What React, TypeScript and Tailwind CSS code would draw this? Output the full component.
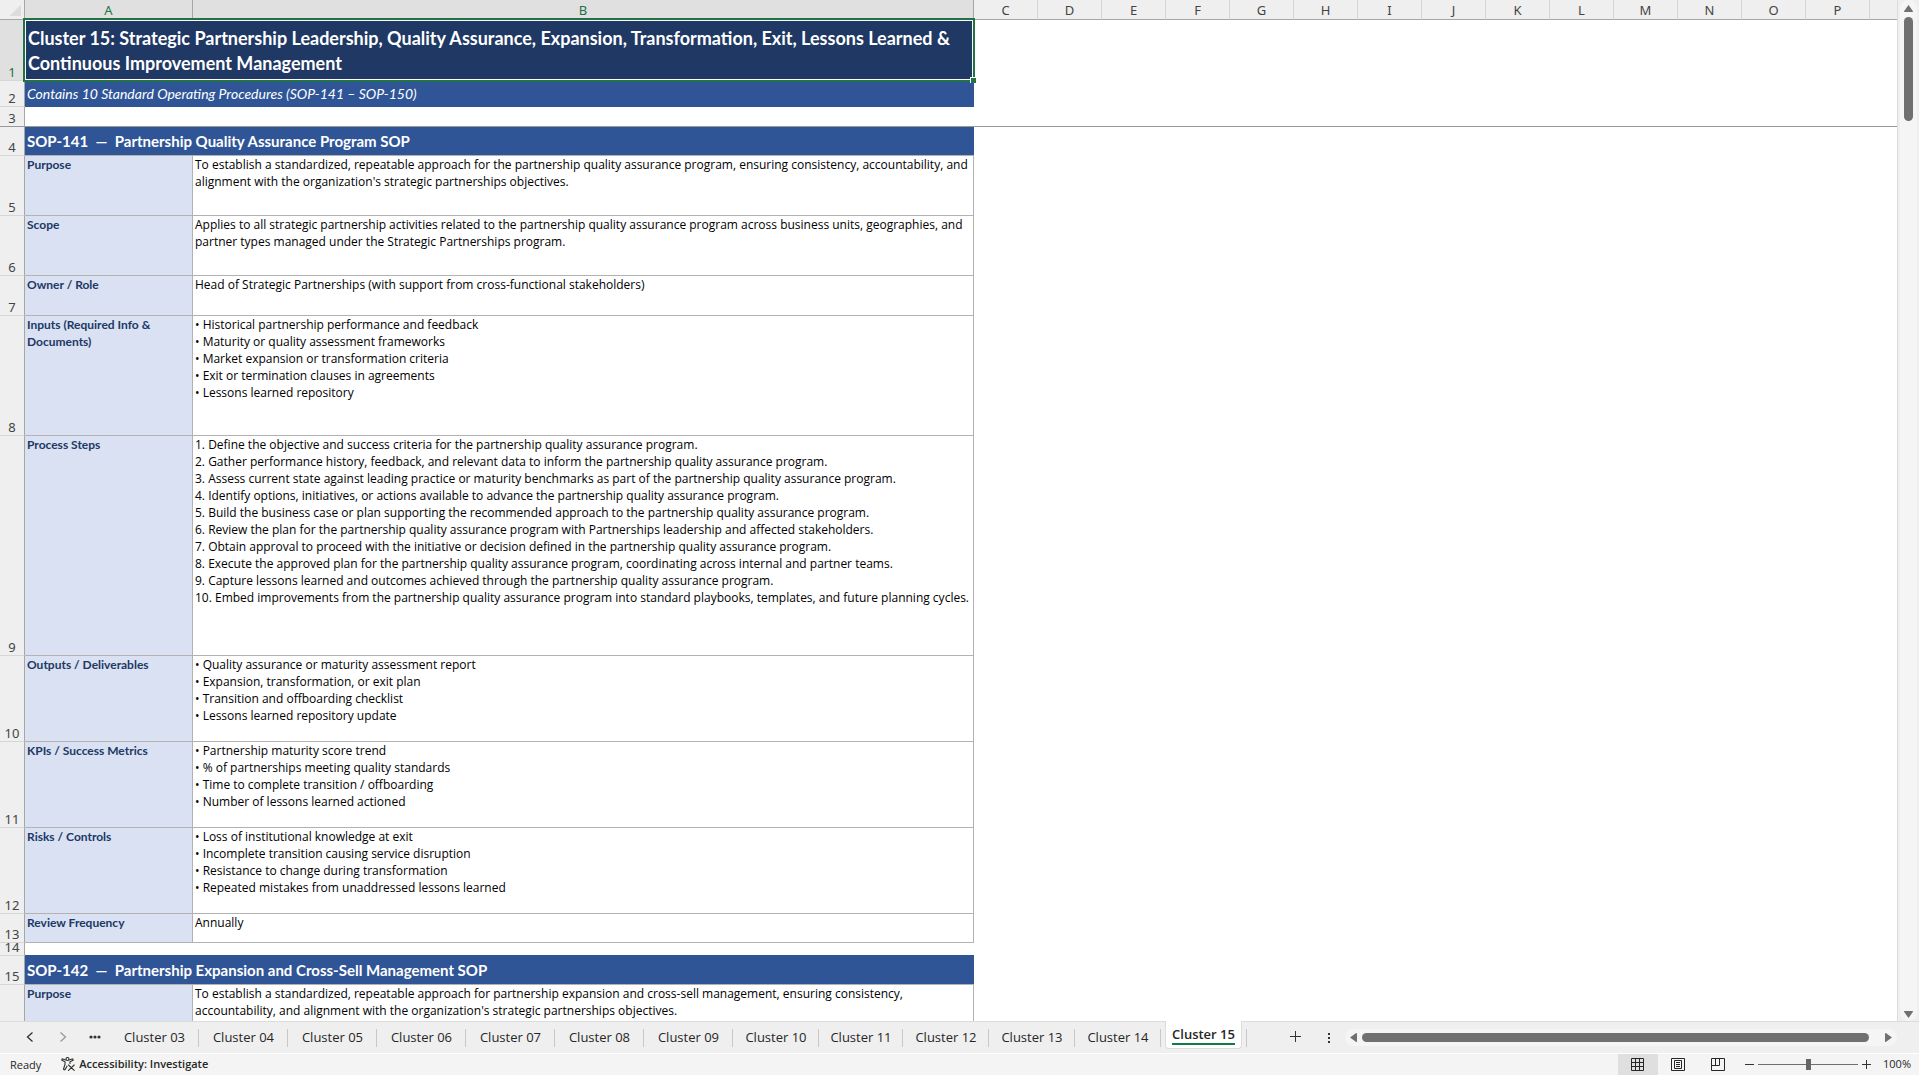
import { useState } from "react";
import clsx from "clsx";

interface SheetRow {
  n: number;
  kind: "title" | "subtitle" | "blank" | "heading" | "field";
  height: string;
  label?: string;
  lines?: string[];
  frozen?: boolean;
}

const COLUMNS = ["C", "D", "E", "F", "G", "H", "I", "J", "K", "L", "M", "N", "O", "P"];

const ROWS: SheetRow[] = [
  {
    n: 1,
    kind: "title",
    height: "h-[61px]",
    lines: [
      "Cluster 15: Strategic Partnership Leadership, Quality Assurance, Expansion, Transformation, Exit, Lessons Learned &",
      "Continuous Improvement Management",
    ],
  },
  { n: 2, kind: "subtitle", height: "h-[26px]", lines: ["Contains 10 Standard Operating Procedures (SOP-141 – SOP-150)"] },
  { n: 3, kind: "blank", height: "h-[20px]", frozen: true },
  { n: 4, kind: "heading", height: "h-[29px]", lines: ["SOP-141  —  Partnership Quality Assurance Program SOP"] },
  {
    n: 5,
    kind: "field",
    height: "h-[60px]",
    label: "Purpose",
    lines: [
      "To establish a standardized, repeatable approach for the partnership quality assurance program, ensuring consistency, accountability, and",
      "alignment with the organization's strategic partnerships objectives.",
    ],
  },
  {
    n: 6,
    kind: "field",
    height: "h-[60px]",
    label: "Scope",
    lines: [
      "Applies to all strategic partnership activities related to the partnership quality assurance program across business units, geographies, and",
      "partner types managed under the Strategic Partnerships program.",
    ],
  },
  {
    n: 7,
    kind: "field",
    height: "h-[40px]",
    label: "Owner / Role",
    lines: ["Head of Strategic Partnerships (with support from cross-functional stakeholders)"],
  },
  {
    n: 8,
    kind: "field",
    height: "h-[120px]",
    label: "Inputs (Required Info & Documents)",
    lines: [
      "• Historical partnership performance and feedback",
      "• Maturity or quality assessment frameworks",
      "• Market expansion or transformation criteria",
      "• Exit or termination clauses in agreements",
      "• Lessons learned repository",
    ],
  },
  {
    n: 9,
    kind: "field",
    height: "h-[220px]",
    label: "Process Steps",
    lines: [
      "1. Define the objective and success criteria for the partnership quality assurance program.",
      "2. Gather performance history, feedback, and relevant data to inform the partnership quality assurance program.",
      "3. Assess current state against leading practice or maturity benchmarks as part of the partnership quality assurance program.",
      "4. Identify options, initiatives, or actions available to advance the partnership quality assurance program.",
      "5. Build the business case or plan supporting the recommended approach to the partnership quality assurance program.",
      "6. Review the plan for the partnership quality assurance program with Partnerships leadership and affected stakeholders.",
      "7. Obtain approval to proceed with the initiative or decision defined in the partnership quality assurance program.",
      "8. Execute the approved plan for the partnership quality assurance program, coordinating across internal and partner teams.",
      "9. Capture lessons learned and outcomes achieved through the partnership quality assurance program.",
      "10. Embed improvements from the partnership quality assurance program into standard playbooks, templates, and future planning cycles.",
    ],
  },
  {
    n: 10,
    kind: "field",
    height: "h-[86px]",
    label: "Outputs / Deliverables",
    lines: [
      "• Quality assurance or maturity assessment report",
      "• Expansion, transformation, or exit plan",
      "• Transition and offboarding checklist",
      "• Lessons learned repository update",
    ],
  },
  {
    n: 11,
    kind: "field",
    height: "h-[86px]",
    label: "KPIs / Success Metrics",
    lines: [
      "• Partnership maturity score trend",
      "• % of partnerships meeting quality standards",
      "• Time to complete transition / offboarding",
      "• Number of lessons learned actioned",
    ],
  },
  {
    n: 12,
    kind: "field",
    height: "h-[86px]",
    label: "Risks / Controls",
    lines: [
      "• Loss of institutional knowledge at exit",
      "• Incomplete transition causing service disruption",
      "• Resistance to change during transformation",
      "• Repeated mistakes from unaddressed lessons learned",
    ],
  },
  { n: 13, kind: "field", height: "h-[29px]", label: "Review Frequency", lines: ["Annually"] },
  { n: 14, kind: "blank", height: "h-[13px]" },
  { n: 15, kind: "heading", height: "h-[29px]", lines: ["SOP-142  —  Partnership Expansion and Cross-Sell Management SOP"] },
  {
    n: 16,
    kind: "field",
    height: "h-[60px]",
    label: "Purpose",
    lines: [
      "To establish a standardized, repeatable approach for partnership expansion and cross-sell management, ensuring consistency,",
      "accountability, and alignment with the organization's strategic partnerships objectives.",
    ],
  },
];

const TABS = [
  { name: "Cluster 03", width: "w-[89px]" },
  { name: "Cluster 04", width: "w-[89px]" },
  { name: "Cluster 05", width: "w-[89px]" },
  { name: "Cluster 06", width: "w-[89px]" },
  { name: "Cluster 07", width: "w-[89px]" },
  { name: "Cluster 08", width: "w-[89px]" },
  { name: "Cluster 09", width: "w-[89px]" },
  { name: "Cluster 10", width: "w-[86px]" },
  { name: "Cluster 11", width: "w-[84px]" },
  { name: "Cluster 12", width: "w-[86px]" },
  { name: "Cluster 13", width: "w-[86px]" },
  { name: "Cluster 14", width: "w-[86px]" },
  { name: "Cluster 15", width: "w-[86px]" },
];

function Lines({ lines }: { lines: string[] }) {
  return (
    <>
      {lines.map((line) => (
        <span key={line} className="block whitespace-pre">
          {line}
        </span>
      ))}
    </>
  );
}

function RowCells({ row }: { row: SheetRow }) {
  const lines = row.lines ?? [];

  if (row.kind === "title") {
    return (
      <td colSpan={2} className="relative bg-[#203864] pl-[3px] align-middle font-['Lato',sans-serif] text-[18px] leading-[25px] font-bold text-white">
        <Lines lines={lines} />
        {/* Selection frame */}
        <div className="pointer-events-none absolute -top-0.5 -right-px -bottom-px -left-0.5 z-10 border-2 border-[#217346] inset-shadow-[0_0_0_1px_#ffffff]">
          <span className="absolute -right-[3px] -bottom-[3px] size-1.5 border-t border-l border-white bg-[#217346]" />
        </div>
      </td>
    );
  }
  if (row.kind === "subtitle") {
    return (
      <td colSpan={2} className="bg-[#2f5597] pb-0.5 pl-0.5 align-middle font-['Lato',sans-serif] text-[14px] leading-[17px] text-white italic">
        <Lines lines={lines} />
      </td>
    );
  }
  if (row.kind === "heading") {
    return (
      <td colSpan={2} className="border-b border-[#b2b2b2] bg-[#2f5597] pl-0.5 align-middle font-['Lato',sans-serif] text-[15px] leading-[20px] font-bold text-white">
        <Lines lines={lines} />
      </td>
    );
  }
  if (row.kind === "blank") {
    return <td colSpan={2} className={clsx("border-b", row.frozen ? "border-[#999999]" : "border-[#2f5597]")} />;
  }
  return (
    <>
      <th scope="row" className="border-r border-b border-[#b2b2b2] bg-[#d9e1f2] pl-0.5 text-left align-top font-['Lato',sans-serif] text-[12px] leading-[17px] font-bold text-[#203864]">
        {row.label}
      </th>
      <td className="border-r border-b border-[#b2b2b2] pl-0.5 align-top font-['Open_Sans',sans-serif] text-[12px] leading-[17px] text-black">
        <Lines lines={lines} />
      </td>
    </>
  );
}

function Sheet() {
  return (
    <div className="min-w-0 flex-1 overflow-hidden border-r border-[#dcdcdc] bg-white">
      <table className="w-full table-fixed border-separate border-spacing-0">
        <colgroup>
          <col className="w-[25px]" />
          <col className="w-[168px]" />
          <col className="w-[781px]" />
          {COLUMNS.map((c) => (
            <col key={c} className="w-16" />
          ))}
          <col />
        </colgroup>
        <thead className="font-['Noto_Sans',sans-serif] text-[13px] leading-[18px] text-[#444444]">
          <tr className="h-5">
            <th aria-label="Select all" className="border-r border-b border-[#a6a6a6] bg-[#efefef]">
              <svg viewBox="0 0 24 19" className="block h-[19px] w-6" fill="#dcdcdc">
                <path d="M21 4.500V16H9.500Z" />
              </svg>
            </th>
            {["A", "B"].map((c) => (
              <th key={c} scope="col" className="border-r border-b border-[#a6a6a6] bg-[#e0e0e0] pt-px font-normal text-[#217346]">
                {c}
              </th>
            ))}
            {COLUMNS.map((c) => (
              <th key={c} scope="col" className="border-r border-b border-r-[#d6d6d6] border-b-[#a6a6a6] bg-[#efefef] pt-px font-normal">
                {c}
              </th>
            ))}
            <td className="border-b border-[#a6a6a6] bg-[#efefef]" />
          </tr>
        </thead>
        <tbody>
          {ROWS.map((row) => (
            <tr key={row.n} className={row.height}>
              <th
                scope="row"
                className={clsx(
                  "border-r border-b border-r-[#a6a6a6] pb-1 align-bottom font-['Noto_Sans',sans-serif] text-[13px] leading-[8px] font-normal",
                  row.frozen ? "border-b-[#999999]" : "border-b-[#d6d6d6]",
                  row.n === 1 ? "bg-[#e0e0e0] text-[#217346]" : "bg-[#efefef] text-[#444444]",
                )}
              >
                {row.n === 16 ? "" : row.n}
              </th>
              <RowCells row={row} />
              <td colSpan={15} className={clsx(row.frozen && "border-b border-[#999999]")} />
            </tr>
          ))}
        </tbody>
      </table>
    </div>
  );
}

function VerticalScrollbar() {
  return (
    <div className="flex w-[21px] justify-center bg-[#efefef]">
      <div className="flex w-[17px] flex-col items-center rounded-full bg-[#f5f5f5]">
        <button type="button" aria-label="Scroll up" className="flex h-[17px] w-full items-center justify-center">
          <svg viewBox="0 0 9 7" className="h-[7px] w-[9px]" fill="#707070">
            <path d="M4.500 0L9 6.200Q9 7 8.500 7H.5Q0 7 0 6.200Z" />
          </svg>
        </button>
        <div className="h-[104px] w-[9px] rounded-full bg-[#707070]" />
        <button type="button" aria-label="Scroll down" className="mt-auto flex h-[13px] w-full items-center justify-center">
          <svg viewBox="0 0 9 7" className="h-[7px] w-[9px]" fill="#707070">
            <path d="M4.500 7L9 .8Q9 0 8.500 0H.5Q0 0 0 .8Z" />
          </svg>
        </button>
      </div>
    </div>
  );
}

function SheetTabs() {
  const [active, setActive] = useState("Cluster 15");

  return (
    <div className="flex h-8 items-center border-t border-[#dcdcdc] bg-[#efefef] font-['Open_Sans',sans-serif] text-[13px] leading-[18px] text-[#262626]">
      <div className="flex shrink-0 items-center pb-px pl-3.5">
        <button type="button" aria-label="Previous sheet" className="flex h-6 w-8 items-center justify-center">
          <svg viewBox="0 0 8 10" className="h-2.5 w-2" fill="none" stroke="#333333" strokeWidth="1.3">
            <path d="M6.500 .5L1.500 5L6.500 9.500" />
          </svg>
        </button>
        <button type="button" aria-label="Next sheet" className="flex h-6 w-[33px] items-center justify-center">
          <svg viewBox="0 0 8 10" className="h-2.5 w-2" fill="none" stroke="#999999" strokeWidth="1.3">
            <path d="M1.500 .5L6.500 5L1.500 9.500" />
          </svg>
        </button>
        <button type="button" aria-label="More sheets" className="flex h-6 w-[31px] items-center justify-center">
          <svg viewBox="0 0 12 4" className="h-1 w-3" fill="#333333">
            <circle cx="2" cy="2" r="1.600" />
            <circle cx="6" cy="2" r="1.600" />
            <circle cx="10" cy="2" r="1.600" />
          </svg>
        </button>
      </div>

      <div role="tablist" className="flex shrink-0 self-stretch">
        {TABS.map((tab) => (
          <div key={tab.name} className={clsx("flex items-center pl-px", tab.width)}>
            {tab.name === active ? (
              <button
                type="button"
                role="tab"
                aria-selected="true"
                className="-mt-px mr-1 ml-[3px] flex h-7 flex-1 items-start justify-center self-start rounded-b border-x border-b border-[#dcdcdc] bg-white pt-1 font-semibold"
              >
                <span className="border-b-2 border-[#107c41]">{tab.name}</span>
              </button>
            ) : (
              <button
                type="button"
                role="tab"
                aria-selected="false"
                onClick={() => setActive(tab.name)}
                className="flex-1 pb-0.5 text-center"
              >
                {tab.name}
              </button>
            )}
            <span className="h-[18px] w-px bg-[#c8c8c8]" />
          </div>
        ))}
      </div>

      <button type="button" aria-label="New sheet" className="ml-8 flex h-6 w-8 shrink-0 items-center justify-center pb-0.5">
        <svg viewBox="0 0 11 11" className="size-[11px]" stroke="#333333" strokeWidth="1">
          <path d="M5.500 0V11M0 5.500H11" />
        </svg>
      </button>
      <button type="button" aria-label="Sheet options" className="ml-2 flex h-6 w-5 shrink-0 items-center justify-center">
        <svg viewBox="0 0 2 10" className="h-2.5 w-0.5" fill="#333333">
          <path d="M0 0H2V2H0ZM0 4H2V6H0ZM0 8H2V10H0Z" />
        </svg>
      </button>

      {/* Horizontal scrollbar */}
      <div className="mr-[22px] mb-px ml-1.5 flex h-[17px] flex-1 items-center rounded-full bg-[#f5f5f5]">
        <button type="button" aria-label="Scroll left" className="flex h-full w-[17px] items-center justify-center">
          <svg viewBox="0 0 7 9" className="h-[9px] w-[7px]" fill="#707070">
            <path d="M0 4.500L6.200 0Q7 0 7 .5V8.500Q7 9 6.200 9Z" />
          </svg>
        </button>
        <div className="mr-[11px] h-[9px] flex-1 rounded-full bg-[#707070]" />
        <button type="button" aria-label="Scroll right" className="flex h-full w-[17px] items-center justify-center">
          <svg viewBox="0 0 7 9" className="h-[9px] w-[7px]" fill="#707070">
            <path d="M7 4.500L.8 0Q0 0 0 .5V8.500Q0 9 .8 9Z" />
          </svg>
        </button>
      </div>
    </div>
  );
}

function StatusBar() {
  const [zoom, setZoom] = useState(100);

  return (
    <footer className="flex h-[22px] items-center border-t border-white bg-[#f4f4f4] pr-2 pl-2.5 font-['Open_Sans',sans-serif] text-[11px] leading-[16px] text-[#262626]">
      <span>Ready</span>
      <button type="button" className="ml-5 flex items-center gap-1 pb-px font-semibold">
        <svg viewBox="0 0 14 14" className="size-3.5" fill="none" stroke="#333333" strokeWidth="1.100" strokeLinejoin="round" strokeLinecap="round">
          <circle cx="6.500" cy="2" r="1.500" />
          <path d="M5 3L1.800 1.900Q.6 2.200 .8 3.200L4 4.800V7.500L2.500 12Q3 13.400 4 12.600L6 9.200" />
          <path d="M8 3L11.200 1.900Q12.400 2.200 12.200 3.200L9 4.800V6.500" />
          <path d="M7.500 8L13.200 13.400M13.200 8L7.500 13.400" />
        </svg>
        Accessibility: Investigate
      </button>

      <div className="ml-auto flex h-full items-center">
        <button type="button" aria-label="Normal view" aria-pressed="true" className="flex h-full w-10 items-center justify-center bg-[#dfdfdf] pr-px pb-px">
          <svg viewBox="0 0 13 13" className="size-[13px]" fill="none" stroke="#262626">
            <path d="M.5 .5H12.500V12.500H.5ZM4.500 .5V12.500M8.500 .5V12.500M.5 4.500H12.500M.5 8.500H12.500" />
          </svg>
        </button>
        <button type="button" aria-label="Page layout view" className="flex h-full w-10 items-center justify-center pb-px">
          <svg viewBox="0 0 14 13" className="h-[13px] w-3.5" fill="none" stroke="#262626">
            <path d="M.5 .5H13.500V12.500H.5ZM3.500 2.500H10.500V10.500H3.500ZM5 4.500H9M5 6.500H9M5 8.500H9" />
          </svg>
        </button>
        <button type="button" aria-label="Page break preview" className="flex h-full w-10 items-center justify-center pb-px">
          <svg viewBox="0 0 14 13" className="h-[13px] w-3.5" fill="none" stroke="#262626">
            <path d="M.5 .5H13.500V12.500H.5ZM4.500 .5V7.500M8.500 .5V7.500H.5" />
          </svg>
        </button>
        <button type="button" aria-label="Zoom out" onClick={() => setZoom(zoom - 10)} className="ml-[5px] flex h-full w-[15px] items-center justify-end pb-px">
          <svg viewBox="0 0 9 9" className="mr-1 size-[9px]" stroke="#333333">
            <path d="M0 4.500H9" />
          </svg>
        </button>
        <input
          type="range"
          aria-label="Zoom"
          min={10}
          max={190}
          value={zoom}
          onChange={(e) => setZoom(Number(e.target.value))}
          className="h-[11px] w-[100px] appearance-none bg-transparent [&::-webkit-slider-runnable-track]:h-px [&::-webkit-slider-runnable-track]:bg-[#707070] [&::-webkit-slider-thumb]:-mt-[5px] [&::-webkit-slider-thumb]:h-[11px] [&::-webkit-slider-thumb]:w-[5px] [&::-webkit-slider-thumb]:appearance-none [&::-webkit-slider-thumb]:bg-[#666666]"
        />
        <button type="button" aria-label="Zoom in" onClick={() => setZoom(zoom + 10)} className="ml-1 flex h-full w-[9px] items-center justify-center pb-px">
          <svg viewBox="0 0 9 9" className="size-[9px]" stroke="#333333">
            <path d="M4.500 0V9M0 4.500H9" />
          </svg>
        </button>
        <span className="ml-3 pb-px">{zoom}%</span>
      </div>
    </footer>
  );
}

export default function App() {
  return (
    <div className="flex h-screen flex-col overflow-hidden bg-[#efefef]">
      <main className="flex min-h-0 flex-1">
        <Sheet />
        <VerticalScrollbar />
      </main>
      <SheetTabs />
      <StatusBar />
    </div>
  );
}
